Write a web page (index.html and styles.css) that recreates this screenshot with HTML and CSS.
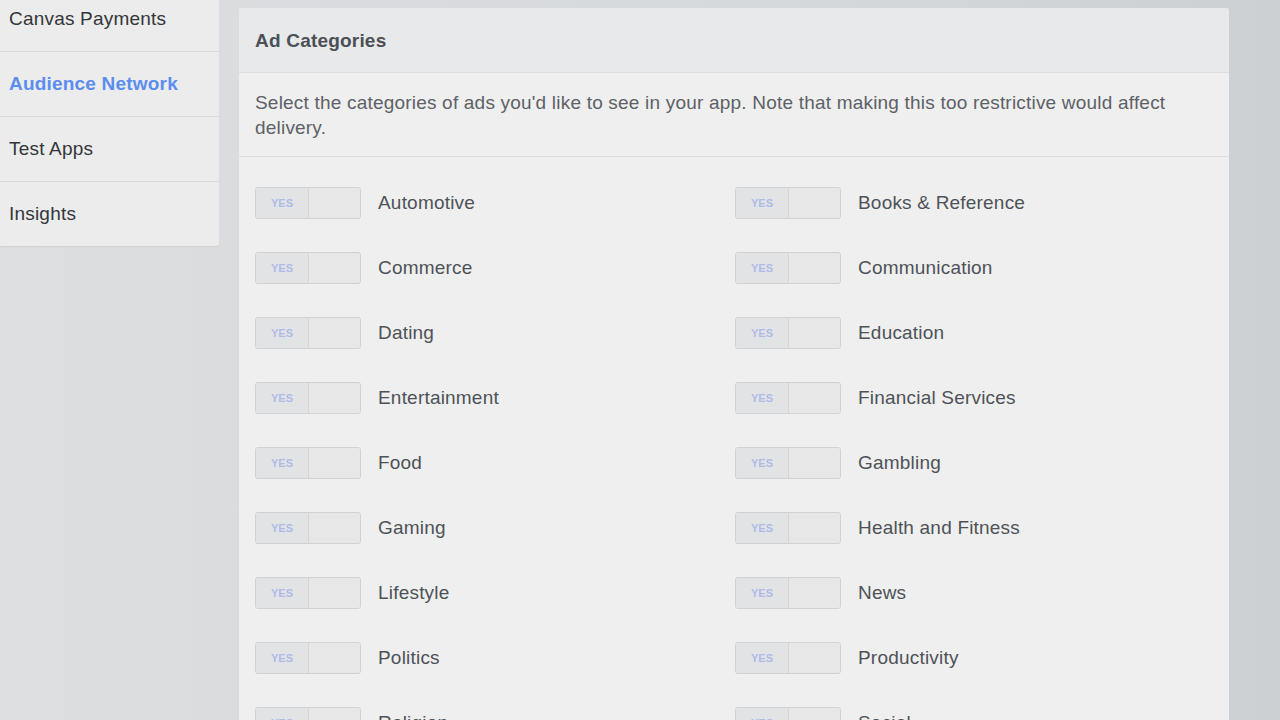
FILE: index.html
```html
<!DOCTYPE html>
<html>
<head>
<meta charset="utf-8">
<link rel="stylesheet" href="styles.css">
</head>
<body>
<div class="page">
  <nav class="sidebar">
    <div class="nav-item">Canvas Payments</div>
    <div class="nav-item active">Audience Network</div>
    <div class="nav-item">Test Apps</div>
    <div class="nav-item">Insights</div>
  </nav>
  <main class="panel">
    <div class="panel-head">Ad Categories</div>
    <div class="panel-desc">Select the categories of ads you'd like to see in your app. Note that making this too restrictive would affect delivery.</div>
    <div class="grid">
      <div class="row"><span class="toggle"><span class="yes">YES</span><span class="no"></span></span><span class="label">Automotive</span></div>
      <div class="row"><span class="toggle"><span class="yes">YES</span><span class="no"></span></span><span class="label">Books &amp; Reference</span></div>
      <div class="row"><span class="toggle"><span class="yes">YES</span><span class="no"></span></span><span class="label">Commerce</span></div>
      <div class="row"><span class="toggle"><span class="yes">YES</span><span class="no"></span></span><span class="label">Communication</span></div>
      <div class="row"><span class="toggle"><span class="yes">YES</span><span class="no"></span></span><span class="label">Dating</span></div>
      <div class="row"><span class="toggle"><span class="yes">YES</span><span class="no"></span></span><span class="label">Education</span></div>
      <div class="row"><span class="toggle"><span class="yes">YES</span><span class="no"></span></span><span class="label">Entertainment</span></div>
      <div class="row"><span class="toggle"><span class="yes">YES</span><span class="no"></span></span><span class="label">Financial Services</span></div>
      <div class="row"><span class="toggle"><span class="yes">YES</span><span class="no"></span></span><span class="label">Food</span></div>
      <div class="row"><span class="toggle"><span class="yes">YES</span><span class="no"></span></span><span class="label">Gambling</span></div>
      <div class="row"><span class="toggle"><span class="yes">YES</span><span class="no"></span></span><span class="label">Gaming</span></div>
      <div class="row"><span class="toggle"><span class="yes">YES</span><span class="no"></span></span><span class="label">Health and Fitness</span></div>
      <div class="row"><span class="toggle"><span class="yes">YES</span><span class="no"></span></span><span class="label">Lifestyle</span></div>
      <div class="row"><span class="toggle"><span class="yes">YES</span><span class="no"></span></span><span class="label">News</span></div>
      <div class="row"><span class="toggle"><span class="yes">YES</span><span class="no"></span></span><span class="label">Politics</span></div>
      <div class="row"><span class="toggle"><span class="yes">YES</span><span class="no"></span></span><span class="label">Productivity</span></div>
      <div class="row"><span class="toggle"><span class="yes">YES</span><span class="no"></span></span><span class="label">Religion</span></div>
      <div class="row"><span class="toggle"><span class="yes">YES</span><span class="no"></span></span><span class="label">Social</span></div>
    </div>
  </main>
</div>
</body>
</html>
```

FILE: styles.css
```css
html, body {
  margin: 0;
  padding: 0;
  height: 100%;
  overflow: hidden;
}
body {
  font-family: "Liberation Sans", Arial, sans-serif;
  letter-spacing: 0.2px;
  background: linear-gradient(90deg, #dcdee0 0%, #d6d9dc 60%, #cdd0d3 100%);
  color: #4b4f56;
}
.page {
  display: flex;
  align-items: flex-start;
  gap: 20px;
}
.sidebar {
  width: 219px;
  flex: none;
  margin-top: -13px;
  background: #ececec;
  border-radius: 0 0 3px 0;
  box-shadow: 0 1px 1px rgba(0,0,0,0.06);
}
.nav-item {
  height: 64px;
  display: flex;
  align-items: center;
  padding-left: 9px;
  font-size: 19px;
  color: #33363b;
  border-bottom: 1px solid #d9dadc;
}
.nav-item:last-child {
  border-bottom: none;
}
.nav-item.active {
  color: #5b8def;
  font-weight: bold;
}
.panel {
  width: 990px;
  flex: none;
  margin-top: 8px;
  background: #efefef;
  border-radius: 3px 3px 0 0;
}
.panel-head {
  height: 65px;
  display: flex;
  align-items: center;
  padding: 2px 0 0 16px;
  box-sizing: border-box;
  font-size: 19px;
  font-weight: bold;
  color: #4b4f56;
  background: #e8e9ea;
  border-bottom: 1px solid #dcdddf;
  border-radius: 3px 3px 0 0;
}
.panel-desc {
  padding: 17px 16px 16px;
  font-size: 19px;
  line-height: 25px;
  color: #5d6167;
  border-bottom: 1px solid #dcdddf;
}
.grid {
  display: grid;
  grid-template-columns: 480px 1fr;
  row-gap: 33px;
  padding: 30px 16px 0;
}
.row {
  display: flex;
  align-items: center;
  height: 32px;
}
.toggle {
  display: flex;
  width: 104px;
  height: 30px;
  border: 1px solid #d0d1d3;
  border-radius: 3px;
  background: #e6e6e7;
  overflow: hidden;
  flex: none;
}
.yes {
  width: 52px;
  display: flex;
  align-items: center;
  justify-content: center;
  font-size: 11px;
  font-weight: bold;
  letter-spacing: 0;
  color: #aebbe8;
  background: #e2e3e5;
  border-right: 1px solid #d3d4d6;
}
.no {
  flex: 1;
  background: #e7e7e8;
}
.label {
  margin-left: 17px;
  font-size: 19px;
  color: #4e5258;
}
```
